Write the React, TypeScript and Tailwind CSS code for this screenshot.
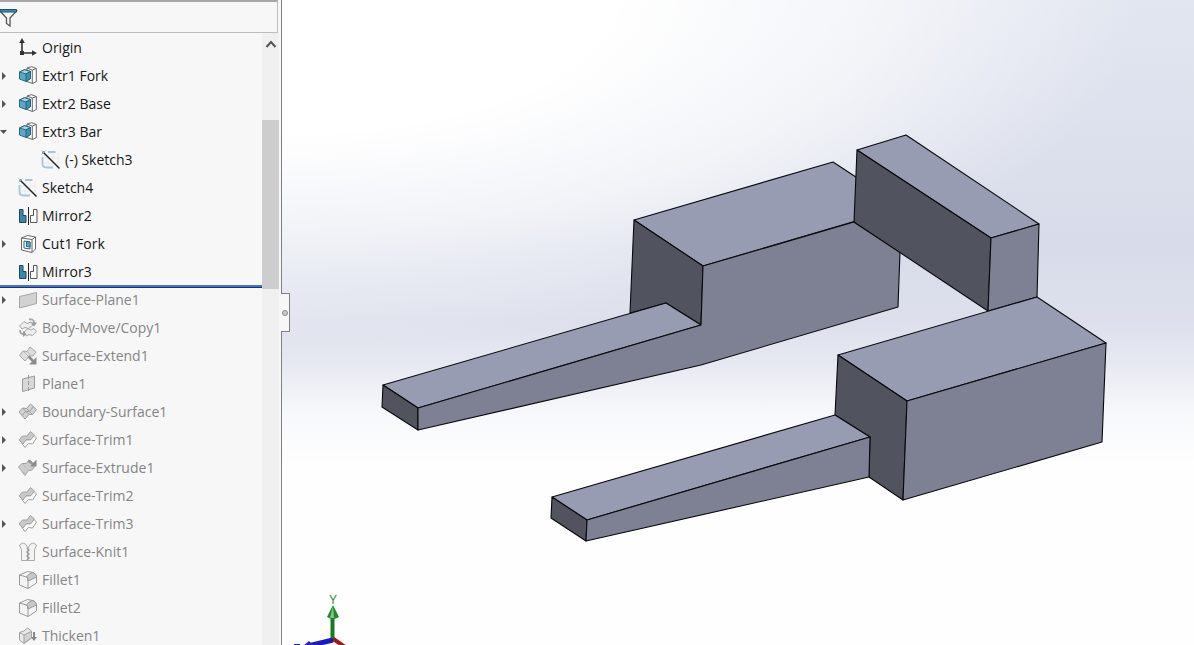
import { useState, type ReactNode } from "react";

type IconName =
  | "origin"
  | "extrude"
  | "sketch"
  | "mirror"
  | "cut"
  | "surfacePlane"
  | "moveCopy"
  | "surfaceExtend"
  | "plane"
  | "boundary"
  | "trim"
  | "surfaceExtrude"
  | "knit"
  | "fillet"
  | "thicken";

interface Feature {
  name: string;
  icon: IconName;
  expand?: "open" | "closed";
  child?: boolean;
}

const activeFeatures: Feature[] = [
  { name: "Origin", icon: "origin" },
  { name: "Extr1 Fork", icon: "extrude", expand: "closed" },
  { name: "Extr2 Base", icon: "extrude", expand: "closed" },
  { name: "Extr3 Bar", icon: "extrude", expand: "open" },
  { name: "(-) Sketch3", icon: "sketch", child: true },
  { name: "Sketch4", icon: "sketch" },
  { name: "Mirror2", icon: "mirror" },
  { name: "Cut1 Fork", icon: "cut", expand: "closed" },
  { name: "Mirror3", icon: "mirror" },
];

// everything below the rollback bar
const rolledBackFeatures: Feature[] = [
  { name: "Surface-Plane1", icon: "surfacePlane", expand: "closed" },
  { name: "Body-Move/Copy1", icon: "moveCopy" },
  { name: "Surface-Extend1", icon: "surfaceExtend" },
  { name: "Plane1", icon: "plane" },
  { name: "Boundary-Surface1", icon: "boundary", expand: "closed" },
  { name: "Surface-Trim1", icon: "trim", expand: "closed" },
  { name: "Surface-Extrude1", icon: "surfaceExtrude", expand: "closed" },
  { name: "Surface-Trim2", icon: "trim" },
  { name: "Surface-Trim3", icon: "trim", expand: "closed" },
  { name: "Surface-Knit1", icon: "knit" },
  { name: "Fillet1", icon: "fillet" },
  { name: "Fillet2", icon: "fillet" },
  { name: "Thicken1", icon: "thicken" },
];

const icons: Record<IconName, ReactNode> = {
  origin: (
    <g stroke="#333" strokeWidth="1.6" fill="#333">
      <path d="M4 15V4M4 15H15" fill="none" />
      <path d="M4 0 6.800 5H1.200Z M19 15 14 17.800V12.200Z" stroke="none" />
      <rect x="2" y="13" width="4" height="4" stroke="none" />
    </g>
  ),
  extrude: (
    <g strokeLinejoin="round">
      <path d="M9 2 13.500 .7 18.300 2.500V15.500L14.500 17.500 9 15.500Z" fill="#fff" stroke="#666" />
      <path d="M9 2 14.300 4V17.500M14.300 4 18.300 2.500" fill="none" stroke="#666" />
      <path d="M1.500 6 6.500 3.700 12.500 5.500V12.500L8 15.500 1.500 13Z" fill="#5aa9c8" stroke="#2a6480" />
      <path d="M1.500 6 6.500 3.700 12.500 5.500 8 8Z" fill="#a6d6e8" stroke="#2a6480" />
      <path d="M8 8V15.500L12.500 12.500V5.500Z" fill="#3d8fb3" stroke="#2a6480" />
    </g>
  ),
  sketch: (
    <g fill="none">
      <path d="M7 4V17M12 4V17M3 8H18M3 13H18M17 3V17" stroke="#e6eaed" />
      <path d="M7 2H14.500M1.500 7V13.500Q1.500 17.500 5.500 17.500H12" stroke="#a3c6d8" strokeWidth="1.800" />
      <path d="M1.500 1.500 18.500 18.500" stroke="#222" strokeWidth="1.400" />
      <path d="M.5 4.500 4.500 .5M.5 .5 2.500 2.500" stroke="#8abbd3" />
    </g>
  ),
  mirror: (
    <g>
      <path d="M1.500 3.500H5V9.500H8V16.500H1.500Z" fill="#3b88ab" stroke="#174a63" />
      <path d="M19 3.500H15.500V9.500H12.500V16.500H19Z" fill="#fff" stroke="#555" />
      <path d="M10.500 1V19" stroke="#222" />
    </g>
  ),
  cut: (
    <g strokeLinejoin="round" stroke="#666">
      <path d="M3.500 4 9.500 1.500 17.500 3V15L14 18.500 3.500 16Z" fill="#fff" />
      <path d="M3.500 4 14 5.500V18.500M14 5.500 17.500 3" fill="none" />
      <path d="M6 7 12 8V15L6 14Z" fill="#fff" stroke="#2a6480" />
      <path d="M8.500 7.500 12 8V13L8.500 12.500Z" fill="#5aa9c8" stroke="#2a6480" />
    </g>
  ),
  surfacePlane: (
    <path d="M1.500 6.500 18.500 2.500V13.500L1.500 18Z" fill="#d2d2d2" stroke="#a6a6a6" />
  ),
  moveCopy: (
    <g strokeLinejoin="round" fill="#eee" stroke="#a3a3a3">
      <path d="M1.500 8 6 3.500 9 5.500 13 4 15 7 10.500 10.500 7 9.500 4 11Z" />
      <path d="M6 14 10 10.500 13 12 16 10.500 18.500 13.500 14.500 17.500 11 16.500 8.500 18Z" />
      <path d="M11 1.500Q16 .5 16 5M2 12Q2 16 5.500 16" fill="none" strokeWidth="1.800" />
      <path d="M13 4.500H19L16 8.500ZM5 13V19L8.500 16Z" fill="#999" stroke="none" />
    </g>
  ),
  surfaceExtend: (
    <g strokeLinejoin="round" stroke="#a3a3a3">
      <path d="M1.500 9.500 5 5 9 5.500 12 1 18 6 15 10 11 10 7 15Z" fill="#dedede" />
      <path d="M5 5 10.500 10.500M9 5.500 13.500 10" fill="none" stroke="#bbb" />
      <path d="M10.500 10.500 16 16" strokeWidth="2.500" stroke="#8b8b8b" />
      <path d="M18.500 11V18.500H11Z" fill="#8b8b8b" stroke="none" />
    </g>
  ),
  plane: (
    <g stroke="#9a9a9a">
      <path d="M4.500 5 16.500 2V14L4.500 17.500Z" fill="#d7d7d7" />
      <path d="M10.500 1V19" strokeDasharray="4 2" />
    </g>
  ),
  boundary: (
    <g strokeLinejoin="round" stroke="#9e9e9e">
      <path d="M1 10 4.500 6 8.500 6.500 12.500 2 18.500 7.500 14.500 12.500 11 12.500 7 17Z" fill="#d3d3d3" />
      <path d="M4.500 6 11 12.500M8.500 6.500 14.500 12.500M4 13.500 7.500 9.500 11.500 9.500 15.500 4.500" fill="none" />
    </g>
  ),
  trim: (
    <g strokeLinejoin="round" stroke="#a0a0a0">
      <path d="M4 13.500 7.500 10 12 9.500 15 4.500 18.500 8 14.500 14 10.500 13.500 7 17.500Z" fill="#fafafa" />
      <path d="M1 10 4.500 6 9 6 12.500 1.500 16.500 5 12.500 10 8.500 9.500 5 14Z" fill="#cacaca" />
    </g>
  ),
  surfaceExtrude: (
    <g strokeLinejoin="round" stroke="#a0a0a0">
      <path d="M.5 9 4 5.500 8 5.500 12 2 17 8 14 12 10.500 12.500 7 17.500Z" fill="#cecece" />
      <path d="M4 5.500 9.500 11.500M1.500 10.500 8 16.500" fill="none" stroke="#bcbcbc" />
      <path d="M10 2.500 15 6" strokeWidth="2.500" stroke="#969696" />
      <path d="M18.500 1.500V8.500H12Z" fill="#8b8b8b" stroke="none" />
    </g>
  ),
  knit: (
    <g strokeLinejoin="round" stroke="#ababab" fill="#f3f3f3">
      <path d="M1.500 3 4.500 1 7.500 2 10 6V18.500H3.500V8Z" />
      <path d="M18.500 3 15.500 1 12.500 2 10 6V18.500H16.500V8Z" />
      <path d="M8.500 6 11.500 8 8.500 10 11.500 12 8.500 14 11.500 16 8.500 18" fill="none" stroke="#8c8c8c" />
    </g>
  ),
  fillet: (
    <g strokeLinejoin="round" stroke="#999">
      <path d="M1.500 5 9.500 1.500 15 2.500Q18.500 4 18.500 7V13L10 18.500 1.500 15Z" fill="#f4f4f4" />
      <path d="M8.500 7Q11 3 15 2.500 18.500 4 18.500 7L10 11Q10 8 8.500 7Z" fill="#c8c8c8" />
      <path d="M1.500 5 8.500 7Q10 8 10 11V18.500" fill="none" />
    </g>
  ),
  thicken: (
    <g strokeLinejoin="round" stroke="#a3a3a3">
      <path d="M1.500 6.500 6 5 9.500 2 13.500 5V12L6 17.500 1.500 14Z" fill="#e9e9e9" />
      <path d="M1.500 6.500 6 9 13.500 5.500V12L6 17V9" fill="#d2d2d2" />
      <path d="M16 6V12" strokeWidth="2" stroke="#858585" />
      <path d="M13 11H19L16 15Z" fill="#858585" stroke="none" />
    </g>
  ),
};

function FeatureRow({ feature, muted }: { feature: Feature; muted?: boolean }) {
  return (
    <li
      className={`flex h-7 items-center gap-1 whitespace-nowrap ${feature.child ? "pl-[41px]" : ""} ${muted ? "text-[#858585]" : "text-[#161616]"}`}
    >
      {!feature.child && (
        <div className="-mr-1 flex w-[18px] shrink-0">
          {feature.expand && (
            <button
              type="button"
              aria-label={`Toggle ${feature.name}`}
              className="flex h-4 w-2 items-center"
            >
              <svg viewBox="0 0 8 10" className="h-[10px] w-2" fill="#555">
                {feature.expand === "open" ? (
                  <path d="M0 3H7L3.500 7Z" />
                ) : (
                  <path d="M2 1 6 5 2 9Z" />
                )}
              </svg>
            </button>
          )}
        </div>
      )}
      <svg viewBox="0 0 20 20" className="h-5 w-5 shrink-0" aria-hidden="true">
        {icons[feature.icon]}
      </svg>
      <span>{feature.name}</span>
    </li>
  );
}

function FilterBar() {
  const [filter, setFilter] = useState("");

  return (
    <div className="mr-[3px] flex h-[33px] shrink-0 items-center border-y border-r border-t-2 border-[#bdbdbd] border-t-[#a8a8a8]">
      <label htmlFor="tree-filter" className="shrink-0">
        <svg viewBox="0 0 18 20" className="h-5 w-[18px]" role="img" aria-label="Filter">
          <path
            d="M0 4 6.500 11V16.500L10 19V11L16.500 4Z"
            fill="#fafafa"
            stroke="#555"
            strokeWidth="1.300"
          />
          <path d="M0 2.500H16.500V5H0Z" fill="#3f8db3" stroke="#1c4f68" />
        </svg>
      </label>
      <input
        id="tree-filter"
        aria-label="Filter features"
        value={filter}
        onChange={(e) => setFilter(e.target.value)}
        className="h-full min-w-0 flex-1 bg-transparent px-2 outline-none"
      />
    </div>
  );
}

function ScrollBar() {
  return (
    <div className="mr-0.5 flex w-[17px] shrink-0 flex-col bg-[#f0f0f0]">
      <button
        type="button"
        aria-label="Scroll up"
        className="flex h-[87px] items-start justify-center pt-1.5"
      >
        <svg viewBox="0 0 12 10" className="h-[10px] w-3">
          <path d="M1.500 8 6 3 10.500 8" fill="none" stroke="#555" strokeWidth="2" />
        </svg>
      </button>
      <div className="h-[169px] bg-[#cdcdcd]" />
    </div>
  );
}

function FeatureTree() {
  return (
    <aside className="relative flex w-[282px] shrink-0 flex-col border-r border-[#808080] bg-[#f7f7f7]">
      <FilterBar />
      <div className="flex min-h-0 flex-1">
        <div className="min-w-0 flex-1 overflow-hidden pt-px">
          <ul>
            {activeFeatures.map((f) => (
              <FeatureRow key={f.name} feature={f} />
            ))}
          </ul>
          <hr className="-mt-px -mb-0.5 h-[3px] border-0 border-b border-[#122f80] bg-[#4473c8]" />
          <ul>
            {rolledBackFeatures.map((f) => (
              <FeatureRow key={f.name} feature={f} muted />
            ))}
          </ul>
        </div>
        <ScrollBar />
      </div>
      <button
        type="button"
        aria-label="Collapse panel"
        className="absolute top-[293px] -right-[9px] z-10 flex h-[39px] w-[9px] items-center justify-center border border-l-0 border-[#808080] bg-[#f7f7f7]"
      >
        <span className="h-1.5 w-1.5 rounded-full border border-[#888] bg-[#ccc]" />
      </button>
    </aside>
  );
}

const TOP = "#989cb3";
const SIDE = "#7e8093";
const DARK = "#51535f";

const faces = [
  // rear block and its fork
  { points: "634,220 833,162 900,206 900,208 703,266", fill: TOP },
  { points: "634,220 703,266 701,325 666,303 630,313", fill: DARK },
  { points: "383,385 666,303 701,325 418,408", fill: TOP },
  { points: "383,385 418,408 418,430 382,407", fill: DARK },
  { points: "418,408 701,325 703,266 854,222 900,252 898,307 701,365 418,430", fill: SIDE },
  // cross bar
  { points: "857,150 906,135 1039,224 991,238", fill: TOP },
  { points: "857,150 991,238 988,311 854,222", fill: DARK },
  { points: "991,238 1039,224 1037,297 988,311", fill: SIDE },
  // front block and its fork
  { points: "838,355 1037,297 1106,343 907,401", fill: TOP },
  { points: "838,355 907,401 903,500 869,477 870,437 835,415", fill: DARK },
  { points: "907,401 1106,343 1102,442 903,500", fill: SIDE },
  { points: "552,497 835,415 870,437 587,520", fill: TOP },
  { points: "552,497 587,520 586,541 551,518", fill: DARK },
  { points: "587,520 870,437 869,477 586,541", fill: SIDE },
];

function Viewport() {
  return (
    <main className="min-w-0 flex-1 bg-[radial-gradient(ellipse_94%_54%_at_0%_0%,#ffffff_0%,#ffffff_38%,#ffffffa0_68%,#ffffff00_100%),linear-gradient(to_bottom,#e2e6f0_0%,#d8dcea_38%,#dde0ec_50%,#e6e8f1_56%,#f7f8fb_64%,#fefefe_72%)]">
      <svg
        viewBox="282 0 912 645"
        className="h-full w-full"
        role="img"
        aria-label="Fork model"
      >
        <g stroke="#08080c" strokeWidth="1.100" strokeLinejoin="round">
          {faces.map((face) => (
            <polygon key={face.points} points={face.points} fill={face.fill} />
          ))}
        </g>

        {/* orientation triad */}
        <path d="M332 638 345 647" stroke="#a01818" strokeWidth="4" />
        <path d="M333 640 308 646" stroke="#1a1ac0" strokeWidth="5" />
        <path d="M303 646 309 641 314 646Z" fill="#2222d0" />
        <path d="M294 645H300" stroke="#1a1ac0" strokeWidth="2" />
        <path d="M332.500 617V638" stroke="#177a22" strokeWidth="4" />
        <path d="M333 605 339 617Q333 621 327 617Z" fill="#1f8a2c" />
        <path d="M333 606 334 618 330 618Z" fill="#7cc884" />
        <text
          x="333"
          y="604"
          textAnchor="middle"
          fontSize="12"
          fill="#2f8a38"
          fontFamily="Liberation Sans, sans-serif"
        >
          Y
        </text>
      </svg>
    </main>
  );
}

export default function App() {
  return (
    <div className="flex h-screen overflow-hidden bg-white font-['Open_Sans','Noto_Sans',sans-serif] text-sm">
      <FeatureTree />
      <Viewport />
    </div>
  );
}
